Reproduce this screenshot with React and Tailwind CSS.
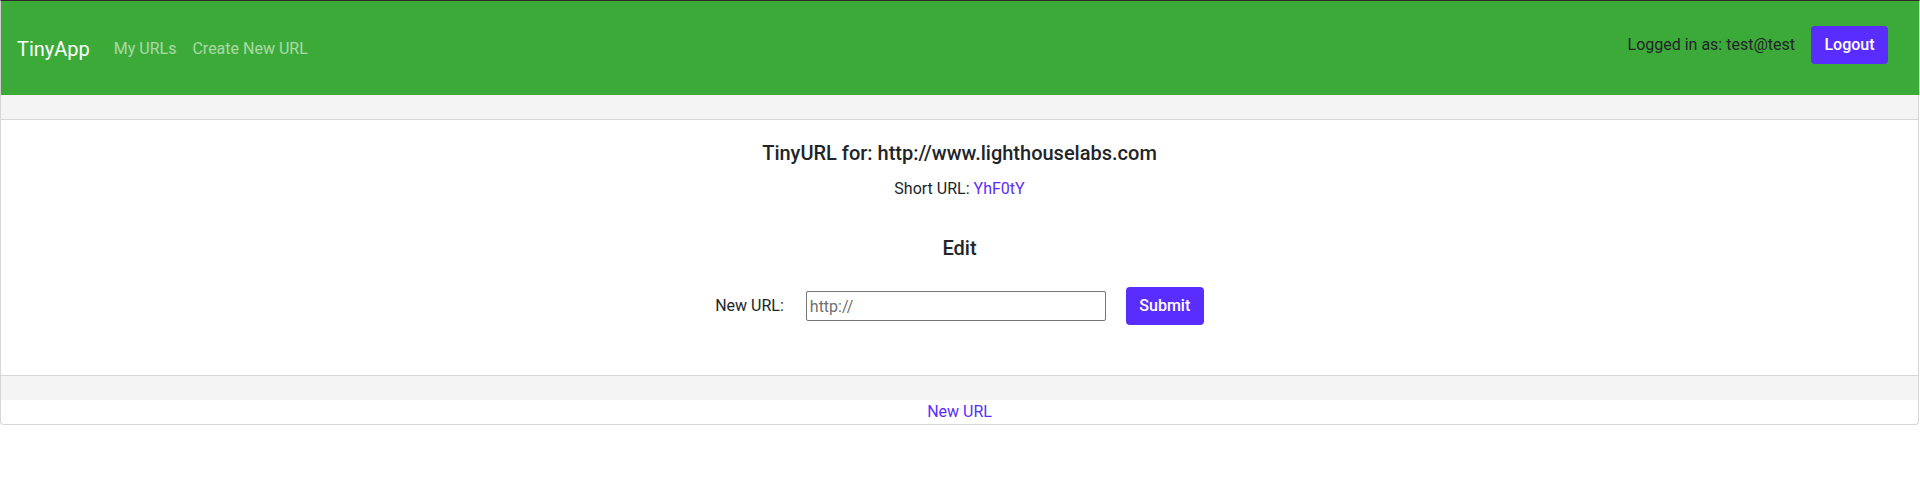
export default function App() {
  return (
    <div className="min-h-screen bg-white text-[#212529] font-['Roboto',sans-serif]">
      {/* Navbar */}
      <nav className="h-[95px] bg-[#3caa38] border-t border-t-[#2b2b2b] border-x border-x-[#cfcfcf] flex items-center justify-between pl-4 pr-[31px]">
        <div className="flex items-center mt-[2px]">
          <span className="text-white text-[20px] mr-[24px]">TinyApp</span>
          <a className="text-white/55 text-[16px] mr-[16px]">My URLs</a>
          <a className="text-white/55 text-[16px]">Create New URL</a>
        </div>
        <div className="flex items-center mb-[7px]">
          <span className="text-[16px] text-[#212529] mr-[16px]">Logged in as: test@test</span>
          <button className="bg-[#5a2dff] text-white text-[16px] w-[77px] h-[38px] rounded-[4px] font-medium">
            Logout
          </button>
        </div>
      </nav>

      {/* Card */}
      <div className="border border-t-0 border-[#d6d6d6] rounded-b-[4px] w-[1919px]">
        <div className="h-[25px] bg-[#f4f4f4] border-b border-[#d6d6d6]" />
        <div className="h-[255px] flex flex-col items-center pt-[21px]">
          <h3 className="text-[20px] font-medium leading-[24px]">TinyURL for: http://www.lighthouselabs.com</h3>
          <p className="text-[16px] mt-[12px] leading-[24px]">
            Short URL: <a className="text-[#5a2dff]">YhF0tY</a>
          </p>
          <h3 className="text-[20px] font-medium leading-[24px] mt-[35px]">Edit</h3>
          <form className="flex items-center mt-[27px]">
            <label className="text-[16px] mr-[22px]">New URL:</label>
            <input
              className="w-[300px] h-[30px] border border-[#767676] rounded-[2px] px-[3px] text-[16px] text-[#555] outline-none placeholder:text-[#6f6f6f]"
              defaultValue=""
              placeholder="http://"
            />
            <button type="button" className="ml-[20px] bg-[#5a2dff] text-white text-[16px] w-[78px] h-[38px] rounded-[4px] font-medium">
              Submit
            </button>
          </form>
        </div>
        <div className="h-[25px] bg-[#f4f4f4] border-t border-[#d6d6d6]" />
        <div className="h-[24px] flex items-center justify-center">
          <a className="text-[#5a2dff] text-[16px]">New URL</a>
        </div>
      </div>
    </div>
  );
}
